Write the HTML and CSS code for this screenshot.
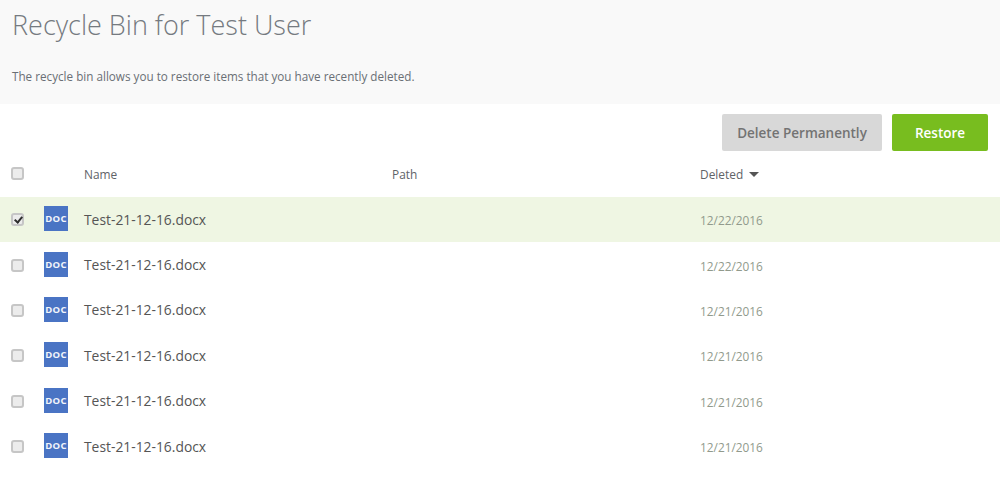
FILE: index.html
```html
<!DOCTYPE html>
<html lang="en">
<head>
<meta charset="utf-8">
<title>Recycle Bin</title>
<link rel="stylesheet" href="styles.css">
</head>
<body>
<header class="head">
  <h1 class="title">Recycle Bin for Test User</h1>
  <p class="desc">The recycle bin allows you to restore items that you have recently deleted.</p>
</header>
<div class="actions">
  <button class="btn btn-grey">Delete Permanently</button>
  <button class="btn btn-green">Restore</button>
</div>
<div class="row row-head">
  <span class="c-check"><input type="checkbox" class="check"></span>
  <span class="c-icon"></span>
  <span class="c-name h">Name</span>
  <span class="c-path h">Path</span>
  <span class="c-date h">Deleted<i class="caret"></i></span>
</div>
<div class="row selected">
  <span class="c-check"><input type="checkbox" class="check" checked></span>
  <span class="c-icon"><span class="doc">DOC</span></span>
  <span class="c-name file">Test-21-12-16.docx</span>
  <span class="c-path"></span>
  <span class="c-date date">12/22/2016</span>
</div>
<div class="row">
  <span class="c-check"><input type="checkbox" class="check"></span>
  <span class="c-icon"><span class="doc">DOC</span></span>
  <span class="c-name file">Test-21-12-16.docx</span>
  <span class="c-path"></span>
  <span class="c-date date">12/22/2016</span>
</div>
<div class="row">
  <span class="c-check"><input type="checkbox" class="check"></span>
  <span class="c-icon"><span class="doc">DOC</span></span>
  <span class="c-name file">Test-21-12-16.docx</span>
  <span class="c-path"></span>
  <span class="c-date date">12/21/2016</span>
</div>
<div class="row">
  <span class="c-check"><input type="checkbox" class="check"></span>
  <span class="c-icon"><span class="doc">DOC</span></span>
  <span class="c-name file">Test-21-12-16.docx</span>
  <span class="c-path"></span>
  <span class="c-date date">12/21/2016</span>
</div>
<div class="row">
  <span class="c-check"><input type="checkbox" class="check"></span>
  <span class="c-icon"><span class="doc">DOC</span></span>
  <span class="c-name file">Test-21-12-16.docx</span>
  <span class="c-path"></span>
  <span class="c-date date">12/21/2016</span>
</div>
<div class="row">
  <span class="c-check"><input type="checkbox" class="check"></span>
  <span class="c-icon"><span class="doc">DOC</span></span>
  <span class="c-name file">Test-21-12-16.docx</span>
  <span class="c-path"></span>
  <span class="c-date date">12/21/2016</span>
</div>
</body>
</html>
```
FILE: styles.css
```css
* { box-sizing: border-box; }
html, body { margin: 0; padding: 0; background: #fff; overflow: hidden; }
body { font-family: "Open Sans", "Noto Sans", sans-serif; color: #555; height: 478px; }
.head { background: #f9f9f9; height: 104px; padding: 6px 12px 0; }
.title { margin: 0; font-size: 27px; font-weight: 300; line-height: 38px; color: #757a80; }
.desc { margin: 22px 0 0; font-size: 11.7px; line-height: 20px; color: #6a6f75; }
.actions { display: flex; justify-content: flex-end; gap: 10px; padding: 10px 12px 0; height: 47px; }
.btn { height: 37px; border: 0; border-radius: 2px; font-family: inherit; font-size: 13.5px; font-weight: 600; padding: 0; }
.btn-grey { width: 160px; background: #d8d8d8; color: #737373; }
.btn-green { width: 96px; background: #78bd1f; color: #fff; }
.row { display: flex; align-items: center; height: 45.4px; }
.row-head { height: 46px; }
.selected { background: #eff6e3; }
.c-check { width: 44px; padding-left: 11px; display: flex; align-items: center; }
.check { appearance: none; position: relative; width: 13px; height: 13px; margin: 0; border: 2px solid #c6c6c6; border-radius: 3px; background: #ececec; }
.row-head .check { margin-top: -2px; }
.check:checked::after { content: ""; position: absolute; left: 2.5px; top: 0; width: 3px; height: 6px; border: solid #2e2e2e; border-width: 0 2px 2px 0; transform: rotate(40deg); }
.c-icon { width: 40px; display: flex; }
.c-name { width: 308px; }
.c-path { width: 308px; }
.h { font-size: 11.9px; color: #5f6368; }
.c-date { display: flex; align-items: center; }
.caret { width: 0; height: 0; margin-left: 6px; border-left: 5px solid transparent; border-right: 5px solid transparent; border-top: 5px solid #555; }
.doc { width: 24px; height: 25px; margin-top: -2px; background: #4a74c4; color: #f2f5fb; font-size: 9.5px; font-weight: 700; letter-spacing: 0.3px; display: flex; align-items: center; justify-content: center; }
.file { font-size: 13.85px; color: #555; margin-top: -1px; }
.date { font-size: 11.85px; color: #919a8c; padding-top: 1px; }
```
